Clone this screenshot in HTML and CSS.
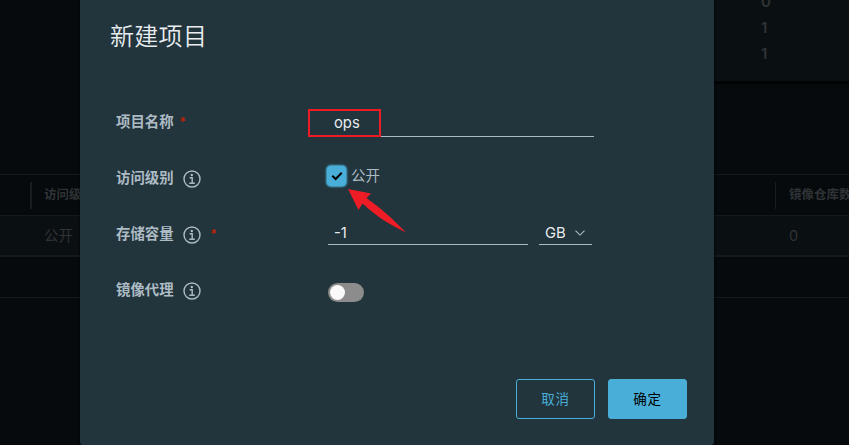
FILE: index.html
```html
<!DOCTYPE html>
<html lang="zh-CN">
<head>
<meta charset="utf-8">
<title>新建项目</title>
<link rel="stylesheet" href="styles.css">
</head>
<body>
<svg width="0" height="0" class="defs" aria-hidden="true">
  <symbol id="info" viewBox="0 0 18 18">
    <circle cx="9" cy="9" r="8" fill="none" stroke="currentColor" stroke-width="1.4"/>
    <circle cx="8.8" cy="5" r="1.2" fill="currentColor"/>
    <path d="M6.6 7.7h2.6v5.3M6.2 13.2h5.6" fill="none" stroke="currentColor" stroke-width="1.4"/>
  </symbol>
</svg>
<main class="page">
  <section class="summary">
    <div class="stats"><span>0</span><span>1</span><span>1</span></div>
  </section>
  <section class="table">
    <div class="row head"><div class="cell access">访问级别</div><div class="cell repos">镜像仓库数</div></div>
    <div class="row body"><div class="cell access">公开</div><div class="cell repos">0</div></div>
    <div class="row foot"></div>
  </section>
</main>
<form class="modal">
  <h1>新建项目</h1>
  <div class="fields">
    <div class="field">
      <div class="label">项目名称<span class="required near">*</span></div>
      <div class="control name">ops<span class="highlight"></span></div>
    </div>
    <div class="field">
      <div class="label">访问级别<svg class="info"><use href="#info"/></svg></div>
      <div class="check"><span class="box"><svg width="12" height="10" viewBox="0 0 12 10"><path d="M1.3 4.7 4.7 8 10.7 1.8" fill="none" stroke="#000" stroke-width="2"/></svg></span>公开</div>
    </div>
    <div class="field">
      <div class="label">存储容量<svg class="info"><use href="#info"/></svg><span class="required">*</span></div>
      <div class="control quota">-1</div>
      <div class="control unit">GB<svg width="10" height="6" viewBox="0 0 10 6"><path d="M.5.7 5 5.1 9.5.7" fill="none" stroke="#adbbc4" stroke-width="1.1"/></svg></div>
    </div>
    <div class="field">
      <div class="label">镜像代理<svg class="info"><use href="#info"/></svg></div>
      <div class="toggle"><span></span></div>
    </div>
  </div>
  <div class="actions"><button type="button">取消</button><button type="button" class="primary">确定</button></div>
  <svg class="arrow" width="60" height="46" viewBox="0 0 60 46"><path d="M0 0 23 4.5 18.5 9 C34 20 46 31 58 43.5 C42 36 28 27 14.5 14.5 L10.5 21Z" fill="#ee1c25"/></svg>
</form>
</body>
</html>
```
FILE: styles.css
```css
* { box-sizing: border-box; }
body {
  margin: 0;
  height: 445px;
  overflow: hidden;
  position: relative;
  background: #060a0d;
  font-family: Inter, "Noto Sans CJK SC", sans-serif;
  font-size: 14px;
}
.defs { position: absolute; }
.page { color: #2f3335; }
.summary {
  height: 82px;
  margin-left: 700px;
  background: #0a0f11;
  border-bottom: 1px solid #020304;
  box-shadow: 0 2px 1px #020304;
}
.stats {
  margin-left: 61px;
  display: flex;
  flex-direction: column;
  transform: translateY(-11px);
  font-size: 15px;
  font-weight: 600;
  line-height: 26px;
}
.table { margin-top: 92px; border-top: 1px solid #14191b; }
.row { display: grid; grid-template-columns: 30px 745px 74px; }
.cell { white-space: nowrap; }
.access { grid-column: 2; padding-left: 14px; }
.repos { padding-left: 14px; }
.head { height: 41px; align-items: center; border-bottom: 1px solid #14191b; font-size: 12.5px; font-weight: 700; }
.head .cell { height: 27px; line-height: 25px; border-left: 1px solid #171c1e; }
.head .access { border-left-width: 2px; padding-left: 12px; }
.head .repos { padding-left: 13px; }
.body { height: 41px; line-height: 39px; background: #0a0f11; border-bottom: 2px solid #14191b; font-size: 14.5px; }
.foot { height: 41px; border-bottom: 1px solid #14191b; }
.modal {
  position: absolute;
  left: 80px;
  top: 0;
  width: 634px;
  height: 445px;
  padding: 19px 27px 26px 30px;
  display: flex;
  flex-direction: column;
  background: #22343c;
  border-radius: 0 0 3px 3px;
  box-shadow: 0 0 3px #020304;
  color: #adbbc4;
}
h1 { margin: 0; font-size: 24px; line-height: 36px; font-weight: 350; color: #e9edf0; letter-spacing: .3px; }
.fields { margin-top: 39px; padding-left: 6px; }
.field { height: 56px; display: flex; align-items: center; }
.label { width: 212px; display: flex; align-items: center; font-size: 14.4px; font-weight: 700; color: #adbbc4; line-height: 20px; }
.info { width: 18px; height: 18px; margin: 2px 0 0 9px; }
.required { color: #c92100; font-size: 12px; font-weight: 500; margin-left: 10px; }
.required.near { margin-left: 6px; }
.control { height: 25px; border-bottom: 1px solid #adbbc4; color: #e9ecef; font-size: 14.8px; line-height: 24px; padding-left: 6px; position: relative; }
.name { width: 266px; margin-top: 4px; line-height: 22px; }
.quota { width: 200px; margin-right: 11px; }
.quota, .unit { height: 24px; margin-bottom: 2px; }
.unit { width: 53px; display: flex; align-items: center; gap: 9px; }
.highlight { position: absolute; left: -20px; top: -3px; width: 73px; height: 28px; border: 2px solid #ee1c25; }
.check { display: flex; align-items: center; gap: 5px; margin-top: -4px; font-size: 14.5px; line-height: 22px; }
.box { width: 19px; height: 20px; margin-left: -1px; border-radius: 4px; background: #49afd9; box-shadow: 0 0 2px 1px #49afd9; display: grid; place-items: center; }
.toggle { width: 36px; height: 19px; margin-top: 4px; padding: 2px; border-radius: 10px; background: #8c8c8c; }
.toggle span { display: block; width: 15px; height: 15px; border-radius: 50%; background: #fafafa; }
.actions { margin-top: auto; display: flex; justify-content: flex-end; gap: 13px; }
button { width: 79px; height: 40px; padding: 0 0 2px; border: 1px solid #49afd9; border-radius: 3px; background: transparent; color: #49afd9; font: 400 13.5px "Noto Sans CJK SC", sans-serif; letter-spacing: .8px; }
.primary { background: #49afd9; color: #000; }
.arrow { position: absolute; left: 268px; top: 189px; }
```
